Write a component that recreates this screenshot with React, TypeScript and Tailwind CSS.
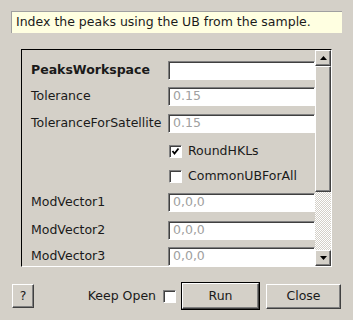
const raised =
  "border border-t-white border-l-white border-r-[#404040] border-b-[#404040] shadow-[inset_-1px_-1px_0_#808080]";
const sunken =
  "border border-t-[#808080] border-l-[#808080] border-r-white border-b-white shadow-[inset_1px_1px_0_#404040]";

function Input({ value }: { value: string }) {
  return (
    <div className={`flex h-[19px] w-[147px] shrink-0 items-center bg-white pl-[4px] text-[#a0a0a0] ${sunken}`}>
      {value}
    </div>
  );
}

function Check({ checked }: { checked?: boolean }) {
  return (
    <div className={`flex h-[13px] w-[13px] shrink-0 items-center justify-center bg-white ${sunken}`}>
      {checked && (
        <svg width="9" height="9" viewBox="0 0 9 9">
          <polyline points="1.5,4 3.5,6.5 7.5,1.5" fill="none" stroke="#000" strokeWidth="1.8" />
        </svg>
      )}
    </div>
  );
}

function Row({ label, value, bold, className }: { label: string; value: string; bold?: boolean; className: string }) {
  return (
    <div className={`flex items-center ${className}`}>
      <div className={`w-[137px] shrink-0 ${bold ? "font-bold" : ""}`}>{label}</div>
      <Input value={value} />
    </div>
  );
}

function CheckRow({ label, checked, className }: { label: string; checked?: boolean; className: string }) {
  return (
    <div className={`flex h-[13px] items-center pl-[138px] ${className}`}>
      <Check checked={checked} />
      <span className="ml-[6px]">{label}</span>
    </div>
  );
}

function Arrow({ down }: { down?: boolean }) {
  return (
    <div className={`flex h-[16px] w-[16px] shrink-0 items-center justify-center bg-[#d4d0c8] ${raised}`}>
      <svg width="7" height="4" viewBox="0 0 7 4">
        <polygon points={down ? "0,0 7,0 3.5,4" : "0,4 7,4 3.5,0"} fill="#000" />
      </svg>
    </div>
  );
}

export default function App() {
  return (
    <div className="flex h-[320px] w-[353px] flex-col overflow-hidden bg-[#d4d0c8] pt-[11px] font-['DejaVu_Sans',sans-serif] text-[12.5px] text-[#1a1a1a]">
      <div className="mx-[11px] flex h-[22px] items-center border-l border-t border-[#a0a0a0] bg-[#ffffe1] pl-[4px]">
        Index the peaks using the UB from the sample.
      </div>

      <div className="ml-[21px] mt-[16px] flex h-[218px] w-[311px] border border-t-black border-l-black border-r-white border-b-white">
        <div className="flex-1 overflow-hidden pl-[9px]">
          <Row label="PeaksWorkspace" value="" bold className="mt-[11px]" />
          <Row label="Tolerance" value="0.15" className="mt-[7px]" />
          <Row label="ToleranceForSatellite" value="0.15" className="mt-[8px]" />
          <CheckRow label="RoundHKLs" checked className="mt-[12px]" />
          <CheckRow label="CommonUBForAll" className="mt-[12px]" />
          <Row label="ModVector1" value="0,0,0" className="mt-[10px]" />
          <Row label="ModVector2" value="0,0,0" className="mt-[9px]" />
          <Row label="ModVector3" value="0,0,0" className="mt-[7px]" />
        </div>
        <div className="flex w-[16px] flex-col">
          <Arrow />
          <div className={`h-[126px] shrink-0 bg-[#d4d0c8] ${raised}`} />
          <div className="flex-1 bg-[repeating-conic-gradient(#ffffff_0%_25%,#d4d0c8_0%_50%)] bg-[length:2px_2px]" />
          <Arrow down />
        </div>
      </div>

      <div className="mt-[15px] flex h-[28px] items-center pl-[12px] pr-[12px]">
        <div className={`flex h-[24px] w-[22px] items-center justify-center bg-[#d4d0c8] ${raised}`}>?</div>
        <div className="flex-1" />
        <span>Keep Open</span>
        <div className="ml-[7px]">
          <Check />
        </div>
        <div className="ml-[5px] h-[28px] w-[79px] border border-black">
          <div className={`flex h-full w-full items-center justify-center bg-[#d4d0c8] ${raised}`}>Run</div>
        </div>
        <div className={`ml-[6px] flex h-[25px] w-[75px] items-center justify-center bg-[#d4d0c8] ${raised}`}>Close</div>
      </div>
    </div>
  );
}
